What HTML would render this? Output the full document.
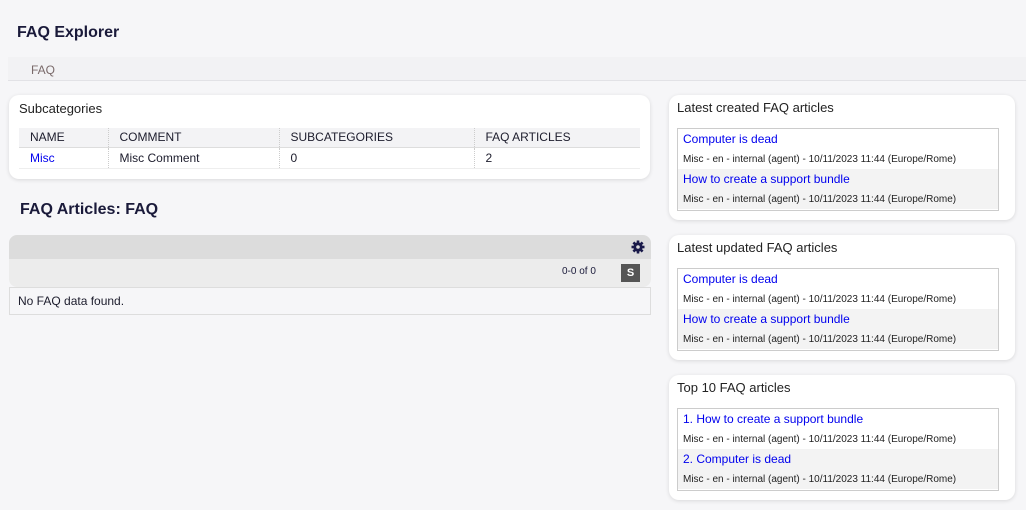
<!DOCTYPE html>
<html><head><meta charset="utf-8"><style>
*{box-sizing:border-box;margin:0;padding:0}
body{width:1026px;height:510px;background:#f6f6f8;font-family:"Liberation Sans",Arial,sans-serif;color:#1c1c2c;position:relative;overflow:hidden;font-size:12px}
.abs{position:absolute}
h1{position:absolute;left:17px;top:24px;font-size:16px;font-weight:bold;color:#1a1a3a}
.crumb{left:8px;top:57px;width:1018px;height:24px;background:#f2f2f4;border-bottom:1px solid #e2e2e6;color:#7a6a6a;font-size:12px;padding:6px 0 0 23px}
.box{position:absolute;background:#fff;border-radius:10px;box-shadow:0 1px 4px rgba(0,0,0,.12)}
.bt{position:absolute;font-size:13px;color:#222}
table{position:absolute;left:10px;top:33px;width:621px;border-collapse:collapse;font-size:12px}
th{background:#f3f3f5;font-weight:normal;text-align:left;height:19px;padding-left:11px;border-left:1px dotted #ccc;border-bottom:1px solid #ddd}
td{height:21px;padding-left:11px;border-left:1px dotted #ccc;border-bottom:1px solid #eee}
th:first-child,td:first-child{border-left:none}
a{color:#0000ee;text-decoration:none}
.list{position:absolute;left:8px;top:33px;width:322px;height:83px;border:1px solid #ccc}
.it{height:40px;padding:3px 0 0 5px}
.it.g{background:#f3f3f3}
.it a{font-size:12px;display:block;height:17px}
.it span{font-size:10px;color:#222;display:block;margin-top:5px}
</style></head><body>
<h1>FAQ Explorer</h1>
<div class="abs crumb">FAQ</div>

<div class="box" style="left:9px;top:95px;width:641px;height:84px">
<div class="bt" style="left:10px;top:6px">Subcategories</div>
<table><tr><th style="width:89px">NAME</th><th style="width:171px">COMMENT</th><th style="width:195px">SUBCATEGORIES</th><th>FAQ ARTICLES</th></tr>
<tr><td><a href="#">Misc</a></td><td>Misc Comment</td><td>0</td><td>2</td></tr></table>
</div>

<div class="abs" style="left:20px;top:201px;font-size:16px;font-weight:bold;color:#1a1a3a">FAQ Articles: FAQ</div>
<div class="abs" style="left:9px;top:235px;width:642px;height:24px;background:#dcdcdc;border-radius:8px 8px 0 0"></div>
<svg class="abs" style="left:631px;top:240px" width="14" height="14" viewBox="0 0 14 14"><circle cx="7" cy="7" r="4.6" fill="#1a1a4a"/><g stroke="#1a1a4a" stroke-width="2.6"><line x1="7" y1="0.5" x2="7" y2="13.5"/><line x1="0.5" y1="7" x2="13.5" y2="7"/><line x1="2.4" y1="2.4" x2="11.6" y2="11.6"/><line x1="11.6" y1="2.4" x2="2.4" y2="11.6"/></g><circle cx="7" cy="7" r="1.8" fill="#dcdcdc"/></svg>
<div class="abs" style="left:9px;top:259px;width:642px;height:28px;background:#ececec;border-radius:0 0 8px 8px"></div>
<div class="abs" style="left:562px;top:266px;font-size:10px;color:#1a1a3a">0-0 of 0</div>
<div class="abs" style="left:621px;top:264px;width:19px;height:18px;background:#555;color:#fff;font-size:11px;font-weight:bold;text-align:center;line-height:18px">S</div>
<div class="abs" style="left:9px;top:287px;width:642px;height:28px;background:#f6f6f8;border:1px solid #ddd;padding:6px 0 0 8px;font-size:12px">No FAQ data found.</div>

<div class="box" style="left:669px;top:95px;width:346px;height:125px">
<div class="bt" style="left:8px;top:5px">Latest created FAQ articles</div>
<div class="list"><div class="it"><a href="#">Computer is dead</a><span>Misc - en - internal (agent) - 10/11/2023 11:44 (Europe/Rome)</span></div><div class="it g"><a href="#">How to create a support bundle</a><span>Misc - en - internal (agent) - 10/11/2023 11:44 (Europe/Rome)</span></div></div>
</div>
<div class="box" style="left:669px;top:235px;width:346px;height:125px">
<div class="bt" style="left:8px;top:5px">Latest updated FAQ articles</div>
<div class="list"><div class="it"><a href="#">Computer is dead</a><span>Misc - en - internal (agent) - 10/11/2023 11:44 (Europe/Rome)</span></div><div class="it g"><a href="#">How to create a support bundle</a><span>Misc - en - internal (agent) - 10/11/2023 11:44 (Europe/Rome)</span></div></div>
</div>
<div class="box" style="left:669px;top:375px;width:346px;height:125px">
<div class="bt" style="left:8px;top:5px">Top 10 FAQ articles</div>
<div class="list"><div class="it"><a href="#">1. How to create a support bundle</a><span>Misc - en - internal (agent) - 10/11/2023 11:44 (Europe/Rome)</span></div><div class="it g"><a href="#">2. Computer is dead</a><span>Misc - en - internal (agent) - 10/11/2023 11:44 (Europe/Rome)</span></div></div>
</div>
</body></html>
